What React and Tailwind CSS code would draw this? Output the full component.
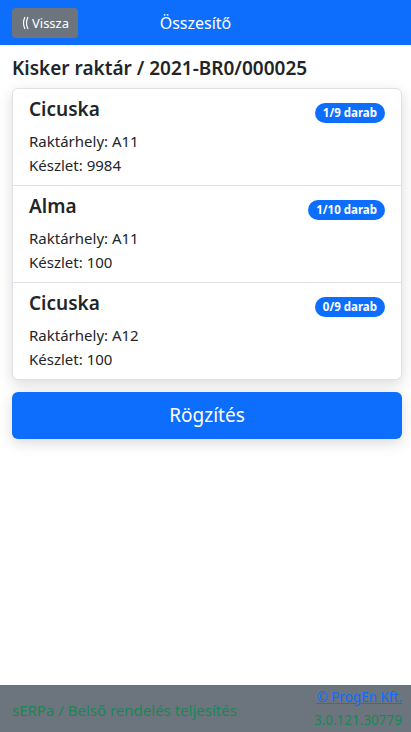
import React from "react";

const items = [
  { name: "Cicuska", place: "A11", stock: "9984", count: "1/9 darab" },
  { name: "Alma", place: "A11", stock: "100", count: "1/10 darab" },
  { name: "Cicuska", place: "A12", stock: "100", count: "0/9 darab" },
];

function App() {
  return (
    <div className="min-h-[732px] bg-white text-[#212529] font-['Noto_Sans',sans-serif] relative">
      {/* Header */}
      <div className="h-[45px] bg-[#0d6efd] flex items-center px-3 relative">
        <button className="h-[30px] w-[66px] rounded bg-[#6c757d] text-white text-[13px] leading-5 flex items-center justify-center">
          <svg width="8" height="14" viewBox="0 0 8 14" className="mr-[3px]" fill="none" stroke="white" strokeWidth="1.2">
            <path d="M4 1 Q1 7 4 13" />
            <path d="M7 1 Q4 7 7 13" />
          </svg>
          Vissza
        </button>
        <div className="absolute left-0 right-0 text-center text-white text-[16px] pointer-events-none">
          <span className="ml-[-20px]">Összesítő</span>
        </div>
      </div>

      <div className="pl-3 pr-[9px]">
        <h1 className="mt-[11px] mb-2 text-[19px] leading-6 font-semibold">
          Kisker raktár / 2021-BR0/000025
        </h1>

        {/* Items */}
        <div className="border border-[#dee2e6] rounded-md shadow-[0_4px_14px_rgba(0,0,0,0.15)] bg-white">
          {items.map((item, i) => (
            <div
              key={i}
              className={
                "px-4 py-2 leading-6 " + (i > 0 ? "border-t border-[#dee2e6]" : "")
              }
            >
              <div className="flex justify-between items-start mb-2 h-6">
                <div className="text-[19px] leading-6 font-semibold">{item.name}</div>
                <span className="mt-[6px] h-5 px-2 rounded-full bg-[#0d6efd] text-white text-[11.5px] leading-none font-bold flex items-center">
                  {item.count}
                </span>
              </div>
              <div className="text-[15px] leading-6">Raktárhely: {item.place}</div>
              <div className="text-[15px] leading-6">Készlet: {item.stock}</div>
            </div>
          ))}
        </div>

        <button className="mt-3 w-full h-[47px] rounded-md bg-[#0d6efd] text-white text-[19px] shadow-[0_4px_14px_rgba(0,0,0,0.15)]">
          Rögzítés
        </button>
      </div>

      {/* Footer */}
      <div className="absolute bottom-0 left-0 right-0 h-[47px] bg-[#6c757d] pl-3 pr-[9px] flex items-center justify-between text-[15px]">
        <div className="text-[#198754] mt-[4px]">sERPa / Belső rendelés teljesítés</div>
        <div className="text-right text-[13.5px] leading-[23px]">
          <a href="#" className="text-[#0d6efd] underline block">© ProgEn Kft.</a>
          <div className="text-[#198754]">3.0.121.30779</div>
        </div>
      </div>
    </div>
  );
}

export default App;
